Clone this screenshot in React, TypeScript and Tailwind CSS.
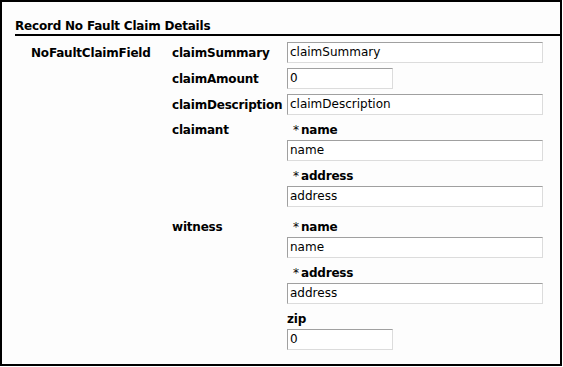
import React from "react";

const font = { fontFamily: '"DejaVu Sans", Verdana, sans-serif' };

function TextInput({ value, wide = true }: { value: string; wide?: boolean }) {
  return (
    <div
      className={`h-[21px] ${wide ? "w-[256px]" : "w-[106px]"} bg-white border border-t-[#a0a0a0] border-l-[#a0a0a0] border-r-[#dcdcdc] border-b-[#dcdcdc] pl-[2px] text-[12px] leading-[19px] text-black`}
    >
      {value}
    </div>
  );
}

function SubField({ label, req = true, value, wide = true, first = false }: { label: string; req?: boolean; value: string; wide?: boolean; first?: boolean }) {
  return (
    <div className={first ? "" : "mt-[7px]"}>
      <div className="h-[16px] leading-[16px] text-[12px] flex items-center">
        {req ? (
          <>
            <span className="pl-[6px] font-normal">*</span>
            <span className="ml-[2px] font-bold tracking-[-0.2px]">{label}</span>
          </>
        ) : (
          <span className="font-bold tracking-[-0.2px]">{label}</span>
        )}
      </div>
      <div className="mt-[2px]">
        <TextInput value={value} wide={wide} />
      </div>
    </div>
  );
}

export default function App() {
  const lbl = "w-[115px] text-[12px] font-bold leading-[16px] tracking-[-0.2px] whitespace-nowrap";
  return (
    <div style={font} className="w-[562px] h-[366px] border-2 border-black bg-[#fdfdfd] text-black">
      <div className="ml-[13px] pt-[17px] border-b-2 border-black">
        <div className="text-[12px] font-bold leading-[15px] tracking-[-0.2px]">Record No Fault Claim Details</div>
      </div>
      <div className="flex mt-[6px] ml-[29px]">
        <div className="w-[141px] h-[21px] flex items-center text-[12px] font-bold leading-[16px] tracking-[-0.2px]">NoFaultClaimField</div>
        <div className="flex flex-col">
          <div className="flex items-center">
            <div className={lbl}>claimSummary</div>
            <TextInput value="claimSummary" />
          </div>
          <div className="flex items-center mt-[5px]">
            <div className={lbl}>claimAmount</div>
            <TextInput value="0" wide={false} />
          </div>
          <div className="flex items-center mt-[5px]">
            <div className={lbl}>claimDescription</div>
            <TextInput value="claimDescription" />
          </div>
          <div className="flex items-start mt-[7px]">
            <div className={lbl}>claimant</div>
            <div>
              <SubField label="name" value="name" first />
              <SubField label="address" value="address" />
            </div>
          </div>
          <div className="flex items-start mt-[12px]">
            <div className={lbl}>witness</div>
            <div>
              <SubField label="name" value="name" first />
              <SubField label="address" value="address" />
              <SubField label="zip" req={false} value="0" wide={false} />
            </div>
          </div>
        </div>
      </div>
    </div>
  );
}
